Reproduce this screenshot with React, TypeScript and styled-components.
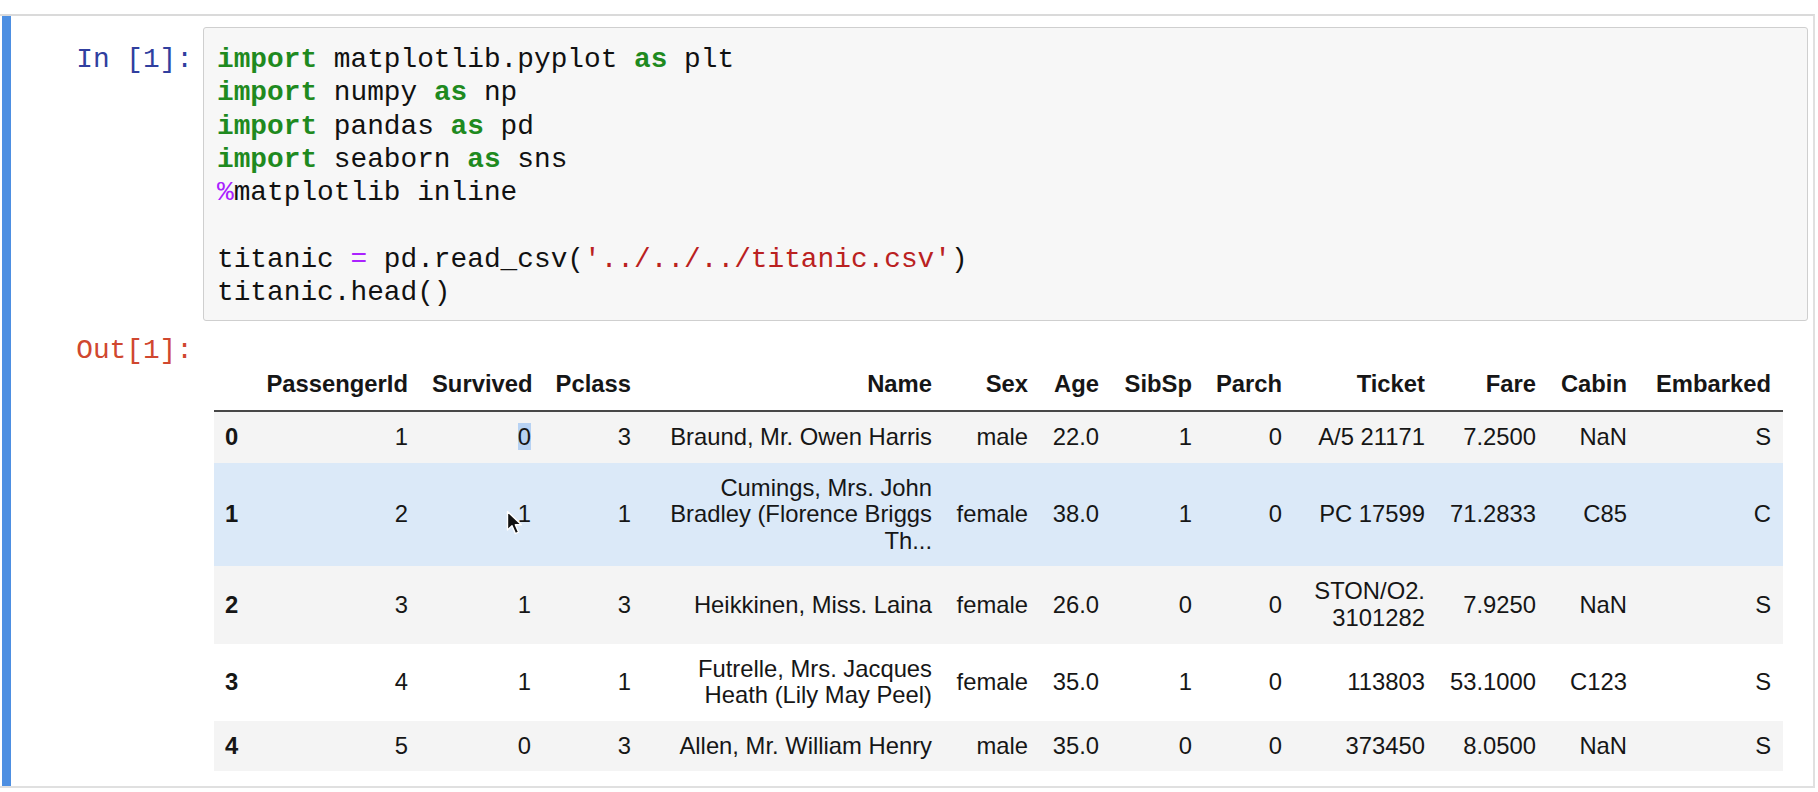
import React from "react";
import styled, { createGlobalStyle } from "styled-components";

const GlobalStyle = createGlobalStyle`
  html, body {
    margin: 0;
    padding: 0;
    background: #ffffff;
  }
  body {
    width: 1818px;
    height: 792px;
    overflow: hidden;
  }
`;

const Page = styled.div`
  box-sizing: border-box;
  height: 792px;
  padding-top: 14px;
  background: #ffffff;
`;

const Notebook = styled.div`
  box-sizing: border-box;
  width: 1815px;
  border-top: 2px solid #dadada;
  border-right: 2px solid #e0e0e0;
  border-bottom: 2px solid #e0e0e0;
  padding-left: 2px;
`;

const Cell = styled.div`
  display: flex;
  flex-direction: column;
  border-left: 9px solid #4d8fe2;
  padding: 11px 5px 15px 0;
`;

const Row = styled.div`
  display: flex;
  align-items: flex-start;
`;

const Prompt = styled.div<{ $kind: "in" | "out"; $top: number }>`
  box-sizing: border-box;
  flex: 0 0 192px;
  width: 192px;
  padding: ${(p) => p.$top}px 10px 0 0;
  text-align: right;
  font-family: "Liberation Mono", "DejaVu Sans Mono", monospace;
  font-size: 27.8px;
  line-height: 33.3px;
  white-space: pre;
  color: ${(p) => (p.$kind === "in" ? "#303f9f" : "#d0472f")};
`;

const CodeBox = styled.div`
  flex: 1;
  border: 1px solid #cfcfcf;
  border-radius: 3px;
  background: #f7f7f7;
  padding: 15px 12px 11px 13px;
`;

const Code = styled.pre`
  margin: 0;
  font-family: "Liberation Mono", "DejaVu Sans Mono", monospace;
  font-size: 27.8px;
  line-height: 33.3px;
  color: #111111;
`;

const Kw = styled.span`
  color: #1f8a1f;
  font-weight: bold;
`;

const Op = styled.span`
  color: #aa22ff;
`;

const Str = styled.span`
  color: #ba2121;
`;

const OutputContent = styled.div`
  flex: 1;
  padding: 38px 0 0 11px;
`;

const Table = styled.table`
  width: 1569px;
  table-layout: fixed;
  border-collapse: collapse;
  border-spacing: 0;
  font-family: "Liberation Sans", Arial, sans-serif;
  font-size: 23.8px;
  line-height: 26.6px;
  color: #161616;
`;

const Col = styled.col<{ $w: number }>`
  width: ${(p) => p.$w}px;
`;

const HeadCell = styled.th`
  padding: 12px 12px;
  text-align: right;
  vertical-align: bottom;
  font-weight: bold;
  border-bottom: 2px solid #474747;
  white-space: nowrap;
`;

const BodyRow = styled.tr<{ $bg: string }>`
  background: ${(p) => p.$bg};
`;

const IndexCell = styled.th`
  padding: 12px 12px 12px 11px;
  text-align: left;
  vertical-align: middle;
  font-weight: bold;
`;

const DataCell = styled.td`
  padding: 12px 12px;
  text-align: right;
  vertical-align: middle;
  font-weight: normal;
`;

const Selected = styled.span`
  background: #b7d2f3;
`;

const CursorHost = styled.span`
  position: relative;
  display: inline-block;
`;

const CursorIcon = styled.svg`
  position: absolute;
  left: -12px;
  top: 9px;
  width: 18px;
  height: 26px;
  pointer-events: none;
`;

const widths = [38, 168, 123, 100, 301, 96, 71, 93, 90, 143, 111, 91, 144];
const headers = [
  "",
  "PassengerId",
  "Survived",
  "Pclass",
  "Name",
  "Sex",
  "Age",
  "SibSp",
  "Parch",
  "Ticket",
  "Fare",
  "Cabin",
  "Embarked",
];

type RowData = string[];

const rows: RowData[] = [
  ["0", "1", "0", "3", "Braund, Mr. Owen Harris", "male", "22.0", "1", "0", "A/5 21171", "7.2500", "NaN", "S"],
  [
    "1",
    "2",
    "1",
    "1",
    "Cumings, Mrs. John Bradley (Florence Briggs Th...",
    "female",
    "38.0",
    "1",
    "0",
    "PC 17599",
    "71.2833",
    "C85",
    "C",
  ],
  ["2", "3", "1", "3", "Heikkinen, Miss. Laina", "female", "26.0", "0", "0", "STON/O2. 3101282", "7.9250", "NaN", "S"],
  ["3", "4", "1", "1", "Futrelle, Mrs. Jacques Heath (Lily May Peel)", "female", "35.0", "1", "0", "113803", "53.1000", "C123", "S"],
  ["4", "5", "0", "3", "Allen, Mr. William Henry", "male", "35.0", "0", "0", "373450", "8.0500", "NaN", "S"],
];

const rowBg = ["#f4f4f4", "#dbe9f8", "#f4f4f4", "#ffffff", "#f4f4f4"];

function Cursor() {
  return (
    <CursorIcon viewBox="0 0 18 26">
      <path
        d="M1.5 1.5 L1.5 20 L6 15.8 L9.4 23.6 L12.6 22.2 L9.3 14.8 L15.4 14.8 Z"
        fill="#111"
        stroke="#fff"
        strokeWidth="1.4"
        strokeLinejoin="round"
      />
    </CursorIcon>
  );
}

function renderValue(r: number, c: number, v: string) {
  if (r === 0 && c === 2) return <Selected>{v}</Selected>;
  if (r === 1 && c === 2)
    return (
      <CursorHost>
        {v}
        <Cursor />
      </CursorHost>
    );
  return v;
}

export default function App() {
  return (
    <>
      <GlobalStyle />
      <Page>
        <Notebook>
          <Cell>
            <Row>
              <Prompt $kind="in" $top={16}>In [1]:</Prompt>
              <CodeBox>
                <Code>
                  <Kw>import</Kw> matplotlib.pyplot <Kw>as</Kw> plt{"\n"}
                  <Kw>import</Kw> numpy <Kw>as</Kw> np{"\n"}
                  <Kw>import</Kw> pandas <Kw>as</Kw> pd{"\n"}
                  <Kw>import</Kw> seaborn <Kw>as</Kw> sns{"\n"}
                  <Op>%</Op>matplotlib inline{"\n"}
                  {"\n"}
                  titanic <Op>=</Op> pd.read_csv(<Str>'../../../titanic.csv'</Str>){"\n"}
                  titanic.head()
                </Code>
              </CodeBox>
            </Row>
            <Row>
              <Prompt $kind="out" $top={13}>Out[1]:</Prompt>
              <OutputContent>
                <Table>
                  <colgroup>
                    {widths.map((w, i) => (
                      <Col key={i} $w={w} />
                    ))}
                  </colgroup>
                  <thead>
                    <tr>
                      {headers.map((h, i) => (
                        <HeadCell key={i}>{h}</HeadCell>
                      ))}
                    </tr>
                  </thead>
                  <tbody>
                    {rows.map((row, r) => (
                      <BodyRow key={r} $bg={rowBg[r]}>
                        <IndexCell>{row[0]}</IndexCell>
                        {row.slice(1).map((v, c) => (
                          <DataCell key={c}>{renderValue(r, c + 1, v)}</DataCell>
                        ))}
                      </BodyRow>
                    ))}
                  </tbody>
                </Table>
              </OutputContent>
            </Row>
          </Cell>
        </Notebook>
      </Page>
    </>
  );
}
